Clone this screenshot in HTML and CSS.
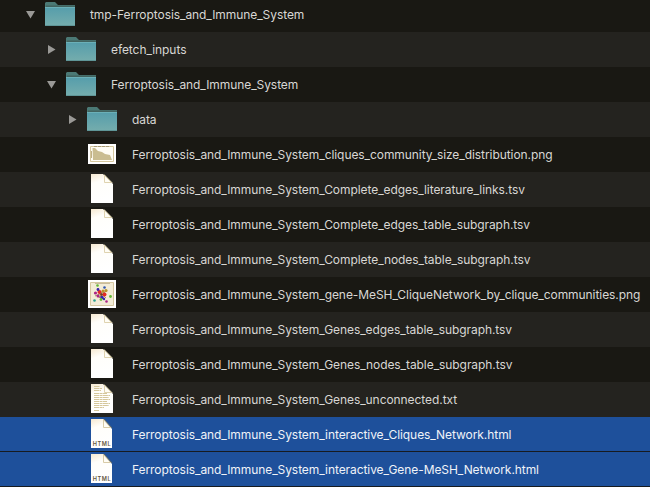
FILE: index.html
```
<!DOCTYPE html>
<html lang="en">
<head>
<meta charset="utf-8">
<title>Files</title>
<link rel="stylesheet" href="styles.css">
</head>
<body>
<svg class="defs" aria-hidden="true">
  <defs>
    <linearGradient id="teal" x1="0" y1="0" x2="0" y2="1"><stop offset="0" stop-color="#559dab"/><stop offset="1" stop-color="#75adad"/></linearGradient>
    <linearGradient id="paper" x1="0.1" y1="0" x2="0.35" y2="1"><stop offset="0" stop-color="#f6ead3"/><stop offset=".3" stop-color="#fffefa"/><stop offset="1" stop-color="#fff"/></linearGradient>
    <symbol id="folder" viewBox="0 0 30 35">
      <path d="M0 28V6l1-1h9l3 3h17v20z" fill="#4b7975"/>
      <path d="M1 8.5h29V10H1z" fill="#41635f"/>
      <path d="M0 10h30v19H0z" fill="url(#teal)"/>
      <path d="M0 10.5h30" stroke="#6bb0b8"/>
      <path d="M0 28.5h30" stroke="#5f9597"/>
    </symbol>
    <symbol id="page" viewBox="0 0 30 35">
      <path d="M4 2h12l10 10v19H4z" fill="url(#paper)"/>
      <path d="M17.5 3v7.5h7z" fill="#fffdf5" stroke="#dfd3af"/>
      <path d="M17 2l9 9" stroke="#807b66" stroke-width=".7"/>
    </symbol>
    <symbol id="text" viewBox="0 0 30 35">
      <use href="#page"/>
      <path d="M7 4.5h6M7 6.5h8M7 8.5h7M7 11.5h13M7 13.5h16M7 15.5h15M7 17.5h16M7 19.5h13M7 21.5h16M7 23.5h15M7 25.5h10M7 28.5h5" stroke="#d5c79b" stroke-dasharray="5 .5 3 .4"/>
    </symbol>
    <symbol id="html" viewBox="0 0 30 35">
      <path d="M4 2h12l9 10v19H4z" fill="url(#paper)"/>
      <path d="M16.5 2.5v8h7z" fill="#fffdf5" stroke="#d8cba7"/>
      <path d="M17 2l8 9" stroke="#75735f" stroke-width=".7"/>
      <text x="5.8" y="29" textLength="17.8" class="badge">HTML</text>
    </symbol>
    <symbol id="chart" viewBox="0 0 30 35">
      <path d="M1 7h28v20H1z" fill="#fff"/>
      <path d="M3.5 9.5h23v15h-23z" fill="#fffdf5" stroke="#d5c79e"/>
      <path d="M5.5 11H8l3 3 4 1 3 2 5 1 2 5H6z" fill="#cabd91"/>
      <path d="M7 9.5h16" stroke="#a79a76" stroke-dasharray="3 1"/>
      <path d="M4.5 14v7" stroke="#c0b186"/>
    </symbol>
    <symbol id="network" viewBox="0 0 30 35">
      <path d="M1 3h28v28H1z" fill="#fff"/>
      <path d="M3.5 5.5h23v23h-23z" fill="#f3ecd7" stroke="#d5c7a0"/>
      <path d="M8 6.5h15" stroke="#c8bb9c"/>
      <path d="M10 13l9 8M8 19l12-5M12 21l4-8M18 15l-6 6" stroke="#a78d65"/>
      <g fill="#ac2586"><circle cx="8.5" cy="16" r="1.6"/><circle cx="11" cy="19" r="1.5"/><circle cx="19.5" cy="24.5" r="1.3"/></g>
      <g fill="#e32924"><circle cx="12.5" cy="15" r="2"/><circle cx="17.5" cy="17.5" r="2"/></g>
      <g fill="#3924aa"><circle cx="11" cy="12.5" r="1.4"/><circle cx="15" cy="20.5" r="1.7"/><circle cx="17" cy="22" r="1.2"/></g>
      <g fill="#62b936"><circle cx="10.5" cy="8.5" r="1.3"/><circle cx="23.5" cy="19.5" r="1.4"/><circle cx="14" cy="22.5" r="1.4"/></g>
      <g fill="#ba922b"><circle cx="16" cy="14" r="1.5"/><circle cx="19" cy="13.5" r="1.6"/></g>
      <circle cx="17.5" cy="10.5" r="1.3" fill="#3057ae"/><circle cx="7.5" cy="23.5" r="1.3" fill="#2ba18d"/>
      <circle cx="14.5" cy="17.5" r="1.3" fill="#7b391f"/>
    </symbol>
    <symbol id="open" viewBox="0 0 9 35"><path d="M0 14h9l-4.5 7.5z" fill="#9a9996"/></symbol>
    <symbol id="closed" viewBox="0 0 9 35"><path d="M1 13l7.5 4.5L1 22z" fill="#9a9996"/></symbol>
  </defs>
</svg>
<main class="tree">
  <div class="row"><svg class="arrow"><use href="#open"/></svg><svg class="icon"><use href="#folder"/></svg><span>tmp-Ferroptosis_and_Immune_System</span></div>
  <div class="row level-1"><svg class="arrow"><use href="#closed"/></svg><svg class="icon"><use href="#folder"/></svg><span>efetch_inputs</span></div>
  <div class="row level-1"><svg class="arrow"><use href="#open"/></svg><svg class="icon"><use href="#folder"/></svg><span>Ferroptosis_and_Immune_System</span></div>
  <div class="row level-2"><svg class="arrow"><use href="#closed"/></svg><svg class="icon"><use href="#folder"/></svg><span>data</span></div>
  <div class="row file"><svg class="icon"><use href="#chart"/></svg><span>Ferroptosis_and_Immune_System_cliques_community_size_distribution.png</span></div>
  <div class="row file"><svg class="icon"><use href="#page"/></svg><span>Ferroptosis_and_Immune_System_Complete_edges_literature_links.tsv</span></div>
  <div class="row file"><svg class="icon"><use href="#page"/></svg><span>Ferroptosis_and_Immune_System_Complete_edges_table_subgraph.tsv</span></div>
  <div class="row file"><svg class="icon"><use href="#page"/></svg><span>Ferroptosis_and_Immune_System_Complete_nodes_table_subgraph.tsv</span></div>
  <div class="row file"><svg class="icon"><use href="#network"/></svg><span>Ferroptosis_and_Immune_System_gene-MeSH_CliqueNetwork_by_clique_communities.png</span></div>
  <div class="row file"><svg class="icon"><use href="#page"/></svg><span>Ferroptosis_and_Immune_System_Genes_edges_table_subgraph.tsv</span></div>
  <div class="row file"><svg class="icon"><use href="#page"/></svg><span>Ferroptosis_and_Immune_System_Genes_nodes_table_subgraph.tsv</span></div>
  <div class="row file"><svg class="icon"><use href="#text"/></svg><span>Ferroptosis_and_Immune_System_Genes_unconnected.txt</span></div>
  <div class="row file selected"><svg class="icon"><use href="#html"/></svg><span>Ferroptosis_and_Immune_System_interactive_Cliques_Network.html</span></div>
  <div class="row file selected"><svg class="icon"><use href="#html"/></svg><span>Ferroptosis_and_Immune_System_interactive_Gene-MeSH_Network.html</span></div>
</main>
</body>
</html>
```
FILE: styles.css
```
body { margin: 0; background: #191813; overflow: hidden; }
.defs { display: block; width: 0; height: 0; }
.tree { margin-top: -3px; font: 12px/35px Inter, sans-serif; letter-spacing: -.07px; color: #d8d7d4; }
.row { display: flex; box-sizing: border-box; height: 35px; padding-left: 26px; white-space: nowrap; background: #191813; }
.row:nth-child(even) { background: #24231f; }
.level-1 { padding-left: 47px; }
.level-2 { padding-left: 68px; }
.file { padding-left: 87px; }
.arrow { width: 9px; height: 35px; margin-right: 10px; flex: none; }
.icon { width: 30px; height: 35px; margin-right: 15px; flex: none; }
.row.selected { background: #1e509b; border-bottom: 1px solid #171b20; color: #f0f3f8; }
.badge { font: 600 5.6px Inter, sans-serif; letter-spacing: 0; fill: #66573e; }
```
